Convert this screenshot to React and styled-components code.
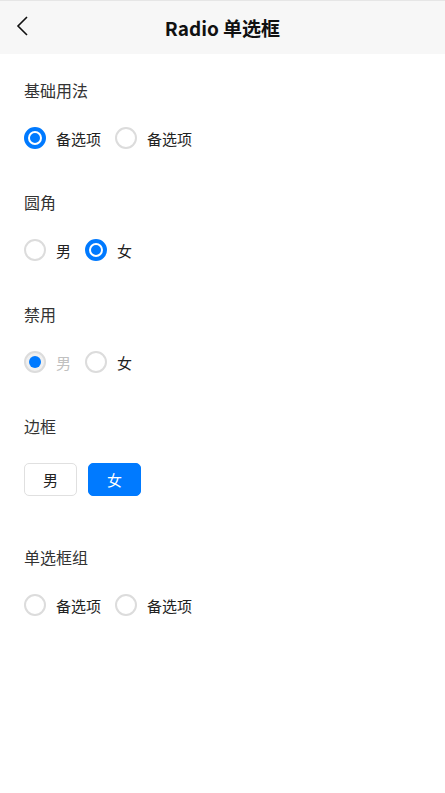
import React, { useState } from 'react'
import styled, { createGlobalStyle } from 'styled-components'

const GlobalStyle = createGlobalStyle`
  body {
    margin: 0;
    background: #fff;
    font-family: "Noto Sans CJK SC", "Noto Sans", sans-serif;
  }
`

const Page = styled.div`
  width: 445px;
  min-height: 793px;
  background: #fff;
`

const NavBar = styled.div`
  height: 53px;
  border-top: 1px solid #e6e6e6;
  background: #f7f7f7;
  display: flex;
  align-items: center;
  justify-content: center;
  position: relative;
`

const BackBtn = styled.div`
  position: absolute;
  left: 14px;
  top: 13px;
  width: 18px;
  height: 24px;
`

const Title = styled.div`
  font-size: 19px;
  font-weight: 700;
  color: #111;
`

const Content = styled.div`
  padding: 0 24px;
`

const Section = styled.div`
  padding-top: ${p => p.top || 24}px;
`

const SectionTitle = styled.div`
  font-size: 16px;
  color: #333;
  line-height: 24px;
  height: 24px;
`

const Row = styled.div`
  display: flex;
  align-items: center;
  gap: ${p => p.gap || 12}px;
  margin-top: ${p => p.mt || 24}px;
  height: 24px;
`

const Option = styled.label`
  display: flex;
  align-items: center;
  gap: 10px;
  font-size: 15px;
  color: ${p => (p.disabled ? '#c0c0c0' : '#222')};
  cursor: ${p => (p.disabled ? 'not-allowed' : 'pointer')};
`

const Circle = styled.span`
  width: 22px;
  height: 22px;
  box-sizing: border-box;
  border-radius: 50%;
  display: flex;
  align-items: center;
  justify-content: center;
  border: 2px solid ${p => (p.checked && !p.disabled ? '#007aff' : '#dcdcdc')};
  background: ${p => (p.disabled ? '#f0f0f0' : p.checked ? '#007aff' : '#fff')};
`

const Inner = styled.span`
  width: ${p => (p.disabled ? 12 : 14)}px;
  height: ${p => (p.disabled ? 12 : 14)}px;
  box-sizing: border-box;
  border-radius: 50%;
  background: #007aff;
  border: ${p => (p.disabled ? 'none' : '2px solid #fff')};
`

const BoxRow = styled.div`
  display: flex;
  gap: 11px;
  margin-top: 25px;
`

const Box = styled.div`
  width: 53px;
  height: 33px;
  box-sizing: border-box;
  border-radius: 5px;
  display: flex;
  align-items: center;
  justify-content: center;
  font-size: 15px;
  border: 1px solid ${p => (p.active ? '#007aff' : '#e0e0e0')};
  background: ${p => (p.active ? '#007aff' : '#fff')};
  color: ${p => (p.active ? '#fff' : '#222')};
`

const Radio = ({ checked, disabled, label, onClick }) => (
  <Option disabled={disabled} onClick={disabled ? undefined : onClick}>
    <Circle checked={checked} disabled={disabled}>
      {checked && <Inner disabled={disabled} />}
    </Circle>
    {label}
  </Option>
)

export default function App() {
  const [basic, setBasic] = useState(0)
  const [round, setRound] = useState(1)
  const [box, setBox] = useState(1)
  const [group, setGroup] = useState(-1)

  return (
    <Page>
      <GlobalStyle />
      <NavBar>
        <BackBtn>
          <svg width="18" height="24" viewBox="0 0 18 24">
            <path d="M13 3 L4 12 L13 21" fill="none" stroke="#111" strokeWidth="1.6" />
          </svg>
        </BackBtn>
        <Title>Radio 单选框</Title>
      </NavBar>
      <Content>
        <Section top={24}>
          <SectionTitle>基础用法</SectionTitle>
          <Row gap={14}>
            <Radio label="备选项" checked={basic === 0} onClick={() => setBasic(0)} />
            <Radio label="备选项" checked={basic === 1} onClick={() => setBasic(1)} />
          </Row>
        </Section>
        <Section top={40}>
          <SectionTitle>圆角</SectionTitle>
          <Row gap={14}>
            <Radio label="男" checked={round === 0} onClick={() => setRound(0)} />
            <Radio label="女" checked={round === 1} onClick={() => setRound(1)} />
          </Row>
        </Section>
        <Section top={40}>
          <SectionTitle>禁用</SectionTitle>
          <Row gap={14}>
            <Radio label="男" checked disabled />
            <Radio label="女" checked={false} />
          </Row>
        </Section>
        <Section top={40}>
          <SectionTitle>边框</SectionTitle>
          <BoxRow>
            <Box active={box === 0} onClick={() => setBox(0)}>男</Box>
            <Box active={box === 1} onClick={() => setBox(1)}>女</Box>
          </BoxRow>
        </Section>
        <Section top={49}>
          <SectionTitle>单选框组</SectionTitle>
          <Row gap={14}>
            <Radio label="备选项" checked={group === 0} onClick={() => setGroup(0)} />
            <Radio label="备选项" checked={group === 1} onClick={() => setGroup(1)} />
          </Row>
        </Section>
      </Content>
    </Page>
  )
}
